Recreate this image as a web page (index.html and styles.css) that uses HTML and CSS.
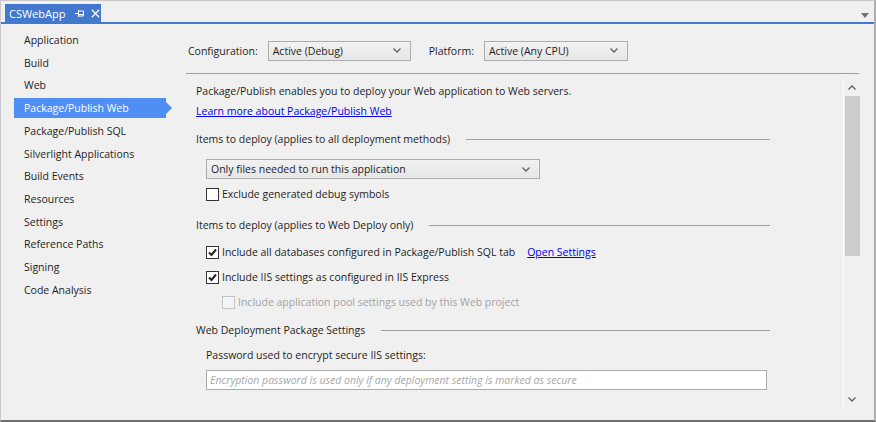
FILE: index.html
```html
<!DOCTYPE html>
<html>
<head>
<meta charset="utf-8">
<link rel="stylesheet" href="styles.css">
</head>
<body>
<div class="window">
  <div class="tabstrip">
    <div class="tab">
      <span class="tab-title">CSWebApp</span>
      <svg class="pin" width="9" height="9" viewBox="0 0 9 9"><path d="M0 4.5H3M3.5 1V8M3.5 2H8.5V7H3.5M3.5 5.5H8.5" stroke="#fff" stroke-width="1" fill="none"/></svg>
      <svg class="close" width="9" height="9" viewBox="0 0 9 9"><path d="M0.8 0.8L8.2 8.2M8.2 0.8L0.8 8.2" stroke="#fff" stroke-width="1.3"/></svg>
    </div>
    <div class="strip-fill"></div>
    <svg class="strip-menu" width="8" height="5" viewBox="0 0 8 5"><path d="M0 0H8L4 5Z" fill="#707070"/></svg>
  </div>
  <div class="body">
    <nav class="nav">
      <div class="nav-item">Application</div>
      <div class="nav-item">Build</div>
      <div class="nav-item">Web</div>
      <div class="nav-item selected">Package/Publish Web</div>
      <div class="nav-item">Package/Publish SQL</div>
      <div class="nav-item">Silverlight Applications</div>
      <div class="nav-item">Build Events</div>
      <div class="nav-item">Resources</div>
      <div class="nav-item">Settings</div>
      <div class="nav-item">Reference Paths</div>
      <div class="nav-item">Signing</div>
      <div class="nav-item">Code Analysis</div>
    </nav>
    <main class="main">
      <div class="config-row">
        <span class="config-label">Configuration:</span>
        <div class="select select-config"><span>Active (Debug)</span><svg class="chev" width="8" height="5" viewBox="0 0 8 5"><path d="M0.5 0.5L4 4L7.5 0.5" stroke="#606060" stroke-width="1.3" fill="none"/></svg></div>
        <span class="config-label platform-label">Platform:</span>
        <div class="select select-platform"><span>Active (Any CPU)</span><svg class="chev" width="8" height="5" viewBox="0 0 8 5"><path d="M0.5 0.5L4 4L7.5 0.5" stroke="#606060" stroke-width="1.3" fill="none"/></svg></div>
      </div>
      <div class="scroll-area">
        <div class="content">
          <p class="intro">Package/Publish enables you to deploy your Web application to Web servers.</p>
          <a class="link learn">Learn more about Package/Publish Web</a>
          <div class="section-head h1">Items to deploy (applies to all deployment methods)</div>
          <div class="select select-wide"><span>Only files needed to run this application</span><svg class="chev" width="8" height="5" viewBox="0 0 8 5"><path d="M0.5 0.5L4 4L7.5 0.5" stroke="#606060" stroke-width="1.3" fill="none"/></svg></div>
          <div class="cb-row cb-exclude"><span class="cb"></span><span>Exclude generated debug symbols</span></div>
          <div class="section-head h2">Items to deploy (applies to Web Deploy only)</div>
          <div class="cb-row cb-db"><span class="cb"><svg width="11" height="11" viewBox="0 0 11 11"><path d="M2 5.5L4.5 8L9 2.5" stroke="#222" stroke-width="2" fill="none"/></svg></span><span>Include all databases configured in Package/Publish SQL tab</span><a class="link open">Open Settings</a></div>
          <div class="cb-row cb-iis"><span class="cb"><svg width="11" height="11" viewBox="0 0 11 11"><path d="M2 5.5L4.5 8L9 2.5" stroke="#222" stroke-width="2" fill="none"/></svg></span><span>Include IIS settings as configured in IIS Express</span></div>
          <div class="cb-row cb-pool disabled"><span class="cb"></span><span>Include application pool settings used by this Web project</span></div>
          <div class="section-head h3">Web Deployment Package Settings</div>
          <div class="pw-label">Password used to encrypt secure IIS settings:</div>
          <div class="pw-input">Encryption password is used only if any deployment setting is marked as secure</div>
        </div>
        <div class="scrollbar">
          <svg class="sb-arrow" width="8" height="5" viewBox="0 0 8 5"><path d="M0.5 4.5L4 1L7.5 4.5" stroke="#606060" stroke-width="1.3" fill="none"/></svg>
          <div class="sb-thumb"></div>
          <div class="sb-track"></div>
          <svg class="sb-arrow" width="8" height="5" viewBox="0 0 8 5"><path d="M0.5 0.5L4 4L7.5 0.5" stroke="#606060" stroke-width="1.3" fill="none"/></svg>
        </div>
      </div>
    </main>
  </div>
</div>
</body>
</html>
```
FILE: styles.css
```css
* { box-sizing: border-box; }
html, body { margin: 0; padding: 0; }
body {
  width: 876px;
  height: 422px;
  background: #f0f0f0;
  font-family: "Open Sans", "Noto Sans", sans-serif;
  font-size: 10.5px;
  color: #1e1e1e;
  overflow: hidden;
}
.window {
  width: 876px;
  height: 422px;
  border: 1px solid #c9c9c9;
  border-bottom: 2px solid #6f6f6f;
  border-right: 2px solid #b0b0b0;
  background: #f0f0f0;
  display: flex;
  flex-direction: column;
}
.tabstrip {
  display: flex;
  align-items: flex-end;
  height: 23px;
  padding-left: 4px;
  border-bottom: 2px solid #4279cf;
  position: relative;
}
.tab {
  height: 18px;
  width: 96px;
  background: #4279cf;
  color: #fff;
  display: flex;
  align-items: center;
  padding-left: 4px;
  font-size: 11px;
}
.tab-title { margin-right: 10px; }
.pin { margin-right: 7px; }
.strip-fill { flex: 1; }
.strip-menu { position: absolute; right: 5px; top: 12px; }
.body {
  flex: 1;
  display: flex;
  min-height: 0;
}
.nav {
  width: 185px;
  padding-top: 6px;
  display: flex;
  flex-direction: column;
  gap: 2.73px;
}
.nav-item {
  height: 20px;
  line-height: 20px;
  margin-left: 13px;
  width: 152px;
  padding-left: 10px;
  position: relative;
  color: #1e1e1e;
}
.nav-item.selected {
  background: #4f8ef3;
  color: #fff;
}
.nav-item.selected::after {
  content: "";
  position: absolute;
  right: -6px;
  top: 4px;
  border-top: 6px solid transparent;
  border-bottom: 6px solid transparent;
  border-left: 6px solid #4f8ef3;
}
.main {
  flex: 1;
  display: flex;
  flex-direction: column;
  padding-right: 15px;
}
.config-row {
  display: flex;
  align-items: center;
  height: 50px;
  padding-left: 2px;
  padding-top: 4px;
  border-bottom: 1px solid #a0a0a0;
}
.config-label { margin-right: 10px; }
.platform-label { margin-left: 18px; margin-right: 10px; }
.select {
  height: 20px;
  border: 1px solid #acacac;
  background: linear-gradient(#f2f2f2, #e6e6e6);
  display: flex;
  align-items: center;
  justify-content: space-between;
  padding: 0 9px 0 4px;
  color: #1e1e1e;
}
.select-config { width: 143px; }
.select-platform { width: 144px; }
.select-wide { width: 334px; margin-left: 10px; margin-top: 12px; }
.scroll-area {
  flex: 1;
  display: flex;
  margin-bottom: 12px;
}
.content {
  flex: 0 0 584px;
  padding-left: 10px;
  padding-top: 9px;
}
.intro { margin: 0; height: 16px; line-height: 16px; }
.link {
  color: #0000ee;
  text-decoration: underline;
  cursor: pointer;
}
.learn { display: block; margin-top: 4px; height: 16px; line-height: 16px; }
.section-head {
  display: flex;
  align-items: center;
  height: 16px;
  line-height: 16px;
  white-space: nowrap;
}
.section-head::after {
  content: "";
  flex: 1;
  height: 1px;
  background: #a0a0a0;
  margin-left: 16px;
}
.h1 { margin-top: 12px; }
.h2 { margin-top: 15px; }
.h3 { margin-top: 12px; }
.cb-row {
  display: flex;
  align-items: center;
  height: 16px;
  padding-left: 10px;
  white-space: nowrap;
}
.cb {
  width: 13px;
  height: 13px;
  border: 1px solid #333;
  background: #fff;
  margin-right: 3px;
  display: flex;
  align-items: center;
  justify-content: center;
}
.cb-exclude { margin-top: 7px; }
.cb-db { margin-top: 11px; }
.cb-iis { margin-top: 9px; }
.cb-pool { margin-top: 9px; padding-left: 26px; }
.disabled { color: #a3a3a3; }
.disabled .cb { border-color: #c4c4c4; background: #f4f4f4; }
.open { margin-left: 12px; }
.pw-label { margin-top: 9px; padding-left: 10px; height: 16px; line-height: 16px; }
.pw-input {
  margin-top: 7px;
  margin-left: 10px;
  width: 561px;
  height: 20px;
  background: #fff;
  border: 1px solid #ababab;
  font-style: italic;
  color: #a8a8a8;
  line-height: 18px;
  padding-left: 3px;
  white-space: nowrap;
  overflow: hidden;
}
.scrollbar {
  margin-left: auto;
  width: 16px;
  margin-top: 5px;
  border-left: 1px solid #fbfbfb;
  display: flex;
  flex-direction: column;
  align-items: center;
}
.sb-arrow { margin: 6px 0; }
.sb-thumb {
  width: 15px;
  margin-left: 1px;
  height: 160px;
  background: #cdcdcd;
}
.sb-track { flex: 1; }
```
